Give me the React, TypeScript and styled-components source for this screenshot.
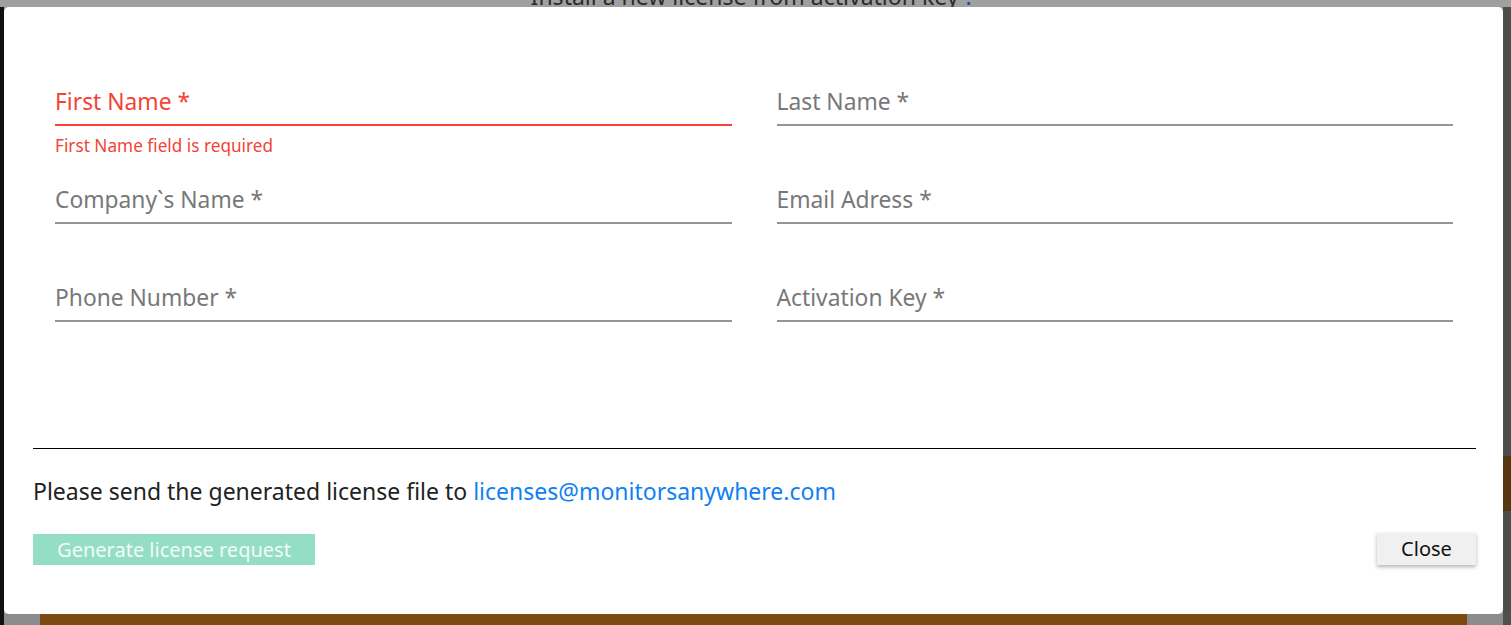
import React from "react";
import styled, { createGlobalStyle } from "styled-components";

const Global = createGlobalStyle`
  html, body { margin: 0; padding: 0; }
  body {
    font-family: "Noto Sans", "Open Sans", sans-serif;
    width: 1511px;
    height: 625px;
    overflow: hidden;
  }
  * { box-sizing: border-box; }
`;

const Backdrop = styled.div`
  display: grid;
  grid-template-columns: 4px 1fr 8px;
  grid-template-rows: 7px 1fr 11px;
  width: 1511px;
  height: 625px;
  background: #a0a0a0;
`;

const TopBar = styled.div`
  grid-column: 1 / 4;
  overflow: hidden;
  background: #a0a0a0;
  text-align: center;
`;

const PageTitle = styled.div`
  margin-top: -15px;
  font-size: 23px;
  line-height: 22px;
  color: #2b2b2b;
  padding-right: 6px;
`;

const HelpMark = styled.span`
  color: #1b4f8f;
`;

const LeftRail = styled.div`
  background: #0f1215;
`;

const RightRail = styled.div`
  display: flex;
  flex-direction: column;
  padding-top: 449px;
  background: #4d4d4d;
`;

const RailSegment = styled.div`
  height: 55px;
  background: #573710;
`;

const BottomBar = styled.div`
  grid-column: 1 / 4;
  display: grid;
  grid-template-columns: 4px 36px 1fr 36px 8px;
`;

const Strip = styled.div<{ $c: string }>`
  background: ${(p) => p.$c};
`;

const Modal = styled.div`
  display: flex;
  flex-direction: column;
  background: #ffffff;
  border-radius: 5px;
  padding: 0 27px 49px 29px;
  overflow: hidden;
`;

const Form = styled.div`
  display: grid;
  grid-template-columns: 1fr 1fr;
  grid-auto-rows: 98px;
  column-gap: 45px;
  padding: 71px 23px 0 22px;
`;

const Field = styled.div`
  display: flex;
  flex-direction: column;
`;

const InputLine = styled.div<{ $error?: boolean }>`
  height: 48px;
  display: flex;
  align-items: flex-end;
  padding-bottom: 7px;
  border-bottom: 2px solid ${(p) => (p.$error ? "#f44336" : "#959595")};
  font-size: 22.8px;
  line-height: 30px;
  color: ${(p) => (p.$error ? "#f44336" : "#787878")};
`;

const ErrorText = styled.div`
  margin-top: 10px;
  font-size: 17.2px;
  line-height: 20px;
  color: #f44336;
`;

const Divider = styled.hr`
  margin: 76px 0 0;
  border: 0;
  border-top: 1px solid #000;
  height: 0;
`;

const Note = styled.p`
  margin: 27px 0 0;
  font-size: 23px;
  line-height: 30px;
  color: #222;
`;

const Link = styled.a`
  color: #0f7ff3;
  text-decoration: none;
`;

const Actions = styled.div`
  display: flex;
  justify-content: space-between;
  align-items: flex-start;
  margin-top: 27px;
`;

const PrimaryButton = styled.button`
  width: 282px;
  height: 31px;
  margin-top: 1px;
  border: 0;
  padding: 0;
  background: #93dec5;
  color: #f4fbf8;
  font-family: inherit;
  font-size: 20px;
  line-height: 30px;
`;

const SecondaryButton = styled.button`
  width: 99px;
  height: 32px;
  border: 0;
  padding: 0;
  background: #f0f0f0;
  color: #111;
  font-family: inherit;
  font-size: 20px;
  line-height: 32px;
  box-shadow: 0 2px 4px rgba(0, 0, 0, 0.3);
`;

const fields = [
  { label: "First Name *", error: "First Name field is required" },
  { label: "Last Name *" },
  { label: "Company`s Name *" },
  { label: "Email Adress *" },
  { label: "Phone Number *" },
  { label: "Activation Key *" },
];

export default function App() {
  return (
    <>
      <Global />
      <Backdrop>
        <TopBar>
          <PageTitle>
            Install a new license from activation key <HelpMark>?</HelpMark>
          </PageTitle>
        </TopBar>
        <LeftRail />
        <Modal>
          <Form>
            {fields.map((f) => (
              <Field key={f.label}>
                <InputLine $error={!!f.error}>{f.label}</InputLine>
                {f.error && <ErrorText>{f.error}</ErrorText>}
              </Field>
            ))}
          </Form>
          <Divider />
          <Note>
            Please send the generated license file to{" "}
            <Link href="#">licenses@monitorsanywhere.com</Link>
          </Note>
          <Actions>
            <PrimaryButton>Generate license request</PrimaryButton>
            <SecondaryButton>Close</SecondaryButton>
          </Actions>
        </Modal>
        <RightRail>
          <RailSegment />
        </RightRail>
        <BottomBar>
          <Strip $c="#0f1215" />
          <Strip $c="#8c8c8c" />
          <Strip $c="#7a4a10" />
          <Strip $c="#8c8c8c" />
          <Strip $c="#505050" />
        </BottomBar>
      </Backdrop>
    </>
  );
}
